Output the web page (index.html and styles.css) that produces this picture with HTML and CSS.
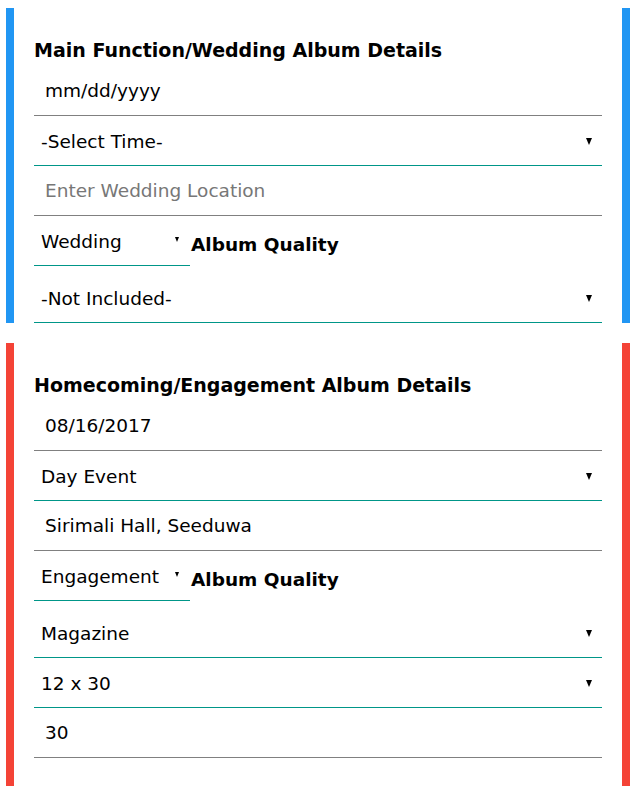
FILE: index.html
```html
<!DOCTYPE html>
<html lang="en">
<head>
<meta charset="utf-8">
<title>Album Details</title>
<link rel="stylesheet" href="styles.css">
</head>
<body>
  <div class="card card-blue">
    <h4 class="card-title">Main Function/Wedding Album Details</h4>
    <input class="field field-date" type="text" placeholder="mm/dd/yyyy">
    <div class="select-box">
      <select class="field select"><option>-Select Time-</option></select>
    </div>
    <input class="field" type="text" placeholder="Enter Wedding Location">
    <div class="quality-row">
      <div class="select-box select-box-small">
        <select class="field select"><option>Wedding</option></select>
      </div>
      <label class="quality-label">Album Quality</label>
    </div>
    <div class="select-box">
      <select class="field select"><option>-Not Included-</option></select>
    </div>
  </div>

  <div class="card card-red">
    <h4 class="card-title">Homecoming/Engagement Album Details</h4>
    <input class="field" type="text" value="08/16/2017">
    <div class="select-box">
      <select class="field select"><option>Day Event</option></select>
    </div>
    <input class="field" type="text" value="Sirimali Hall, Seeduwa">
    <div class="quality-row">
      <div class="select-box select-box-small">
        <select class="field select"><option>Engagement</option></select>
      </div>
      <label class="quality-label">Album Quality</label>
    </div>
    <div class="select-box">
      <select class="field select"><option>Magazine</option></select>
    </div>
    <div class="select-box">
      <select class="field select"><option>12 x 30</option></select>
    </div>
    <input class="field" type="text" value="30">
  </div>
</body>
</html>
```

FILE: styles.css
```css
html, body {
  background: #fff;
}

body {
  margin: 0;
  padding: 8px 8px 0 6px;
  font-family: "DejaVu Sans", Verdana, sans-serif;
  color: #000;
}

.card {
  border-left: 8px solid;
  border-right: 8px solid;
  padding: 31px 20px 0;
}

.card + .card {
  margin-top: 20px;
}

.card-blue {
  border-color: #2196f3;
}

.card-red {
  border-color: #f44336;
  padding-bottom: 28px;
}

.card-title {
  margin: 0 0 5px;
  font-size: 19px;
  line-height: 22px;
  font-weight: bold;
}

.field {
  display: block;
  width: 100%;
  box-sizing: border-box;
  height: 50px;
  margin: 0;
  border: none;
  border-bottom: 1px solid #808080;
  border-radius: 0;
  background: #fff;
  color: #000;
  font-family: "DejaVu Sans", Verdana, sans-serif;
  font-size: 18.5px;
  line-height: 22px;
  padding: 13px 9px 14px 11px;
  outline: none;
}

.field::placeholder {
  color: #777;
  opacity: 1;
}

.field-date::placeholder {
  color: #000;
}

.select-box {
  position: relative;
}

.select {
  -webkit-appearance: none;
  appearance: none;
  border-bottom-color: #009688;
  padding: 15px 5px 12px 7px;
}

.select-box::after {
  content: "";
  position: absolute;
  top: 22px;
  right: 10px;
  width: 0;
  height: 0;
  border-left: 3px solid transparent;
  border-right: 3px solid transparent;
  border-top: 7px solid #000;
  pointer-events: none;
}

.quality-row {
  display: flex;
  align-items: flex-start;
  margin-bottom: 7px;
}

.select-box-small {
  flex: none;
  width: 156px;
}

.select-box-small::after {
  top: 21px;
  right: 11px;
  border-left-width: 2.5px;
  border-right-width: 2.5px;
  border-top-width: 5px;
}

.quality-label {
  margin: 18px 0 0 1px;
  font-size: 18.5px;
  line-height: 22px;
  font-weight: bold;
}
```
